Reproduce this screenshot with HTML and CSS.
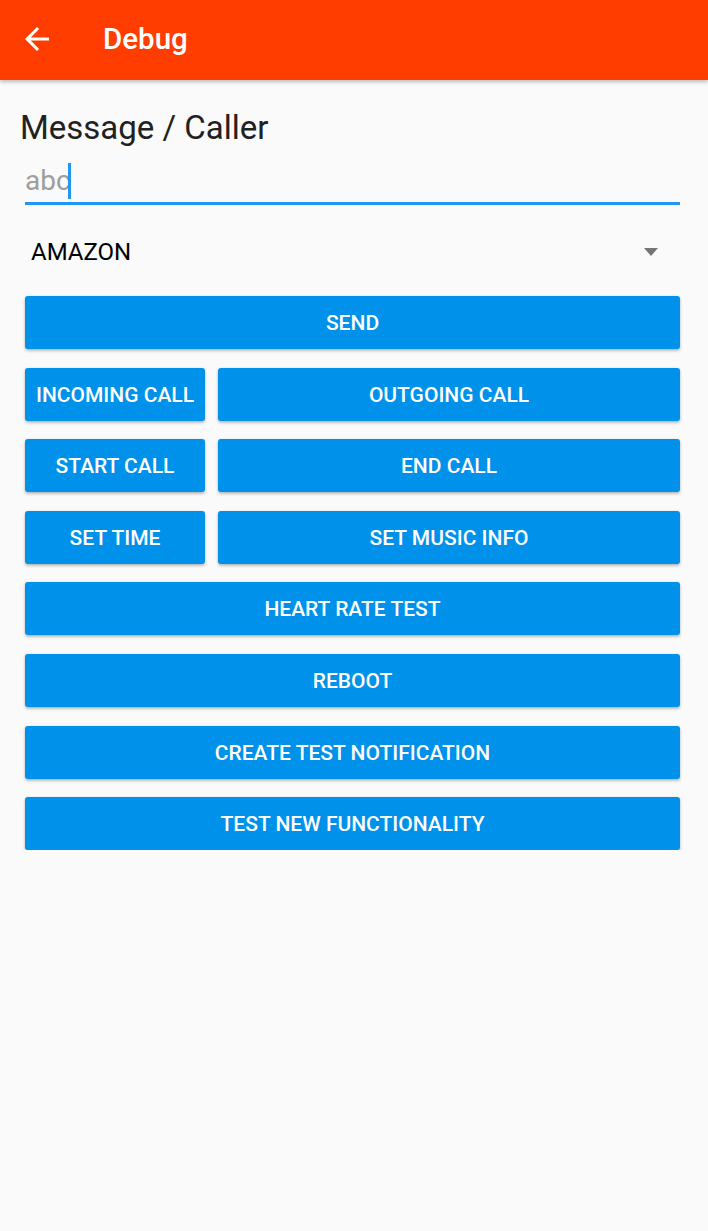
FILE: index.html
```html
<!DOCTYPE html>
<html>
<head>
<meta charset="utf-8">
<link rel="stylesheet" href="styles.css">
</head>
<body>
<header class="appbar">
  <svg class="back" viewBox="0 0 24 24" width="36" height="36"><path d="M20 11H7.83l5.59-5.59L12 4l-8 8 8 8 1.41-1.41L7.83 13H20v-2z" fill="#fff"/></svg>
  <div class="title">Debug</div>
</header>
<main class="content">
  <div class="label">Message / Caller</div>
  <div class="field"><span class="value">abc</span><span class="cursor"></span></div>
  <div class="spinner"><span class="spin-text">AMAZON</span><span class="caret"></span></div>
  <div class="buttons">
    <div class="btn wide">SEND</div>
    <div class="btn">INCOMING CALL</div>
    <div class="btn">OUTGOING CALL</div>
    <div class="btn">START CALL</div>
    <div class="btn">END CALL</div>
    <div class="btn">SET TIME</div>
    <div class="btn">SET MUSIC INFO</div>
    <div class="btn wide">HEART RATE TEST</div>
    <div class="btn wide">REBOOT</div>
    <div class="btn wide">CREATE TEST NOTIFICATION</div>
    <div class="btn wide">TEST NEW FUNCTIONALITY</div>
  </div>
</main>
</body>
</html>
```
FILE: styles.css
```css
html, body {
  margin: 0;
  padding: 0;
  background: #fafafa;
  font-family: Roboto, "Liberation Sans", sans-serif;
}
.appbar {
  height: 80px;
  background: #ff3d00;
  display: flex;
  align-items: center;
  box-shadow: 0 2px 4px rgba(0,0,0,0.25);
  position: relative;
}
.back {
  margin-left: 19px;
  margin-top: -2px;
  display: block;
}
.title {
  margin-left: 48px;
  color: #fff;
  font-size: 29.5px;
  font-weight: 500;
  line-height: 40px;
  margin-top: -2px;
}
.content {
  padding: 0 28px 0 25px;
}
.label {
  margin-top: 28px;
  margin-left: -5px;
  font-size: 33px;
  line-height: 40px;
  color: #212121;
}
.field {
  margin-top: 15px;
  height: 36px;
  border-bottom: 3px solid #2196f3;
  padding-bottom: 3px;
  display: flex;
  align-items: stretch;
}
.value {
  font-size: 28px;
  line-height: 36px;
  color: #9e9e9e;
}
.cursor {
  width: 3px;
  background: #2196f3;
  margin-left: -3px;
}
.spinner {
  margin-top: 23px;
  height: 48px;
  display: flex;
  align-items: center;
  justify-content: space-between;
  padding-left: 6px;
  padding-right: 22px;
}
.spin-text {
  font-size: 24px;
  line-height: 28px;
  color: #000;
}
.caret {
  width: 0;
  height: 0;
  border-left: 7.5px solid transparent;
  border-right: 7.5px solid transparent;
  border-top: 8px solid #757575;
}
.buttons {
  margin-top: 20px;
  display: grid;
  grid-template-columns: 180px 1fr;
  column-gap: 13px;
  row-gap: 18.6px;
}
.btn {
  height: 53px;
  background: #0091ea;
  border-radius: 3px;
  color: #fff;
  font-size: 21px;
  font-weight: 500;
  line-height: 24px;
  padding-top: 1px;
  box-sizing: border-box;
  display: flex;
  align-items: center;
  justify-content: center;
  box-shadow: 0 2px 3px rgba(0,0,0,0.24), 0 0 2px rgba(0,0,0,0.12);
  white-space: nowrap;
}
.wide {
  grid-column: 1 / 3;
}
```
